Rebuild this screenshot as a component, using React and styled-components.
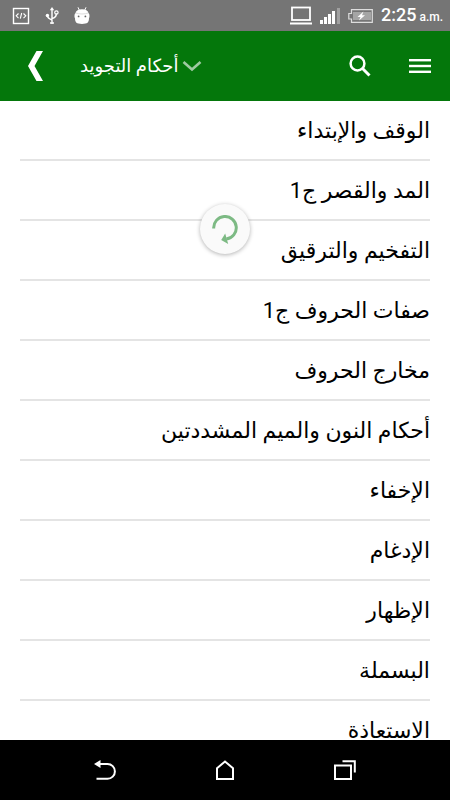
import React from "react";
import styled, { createGlobalStyle } from "styled-components";

const GlobalStyle = createGlobalStyle`
  * {
    box-sizing: border-box;
  }

  body {
    margin: 0;
    background: #ffffff;
    font-family: Roboto, "DejaVu Sans", sans-serif;
  }
`;

// Layout
const Screen = styled.div`
  display: flex;
  flex-direction: column;
  height: 100vh;
  overflow: hidden;
`;

const StatusBar = styled.div`
  display: flex;
  flex: none;
  align-items: center;
  justify-content: space-between;
  height: 31px;
  padding: 0 7px 0 12px;
  background: #757575;
  color: #ffffff;
`;

const StatusGroup = styled.div`
  display: flex;
  align-items: center;
  gap: ${({ $gap }) => $gap}px;
`;

const Clock = styled.time`
  display: flex;
  align-items: baseline;
  gap: 3px;
  font-size: 18px;
  font-weight: 500;
  line-height: 24px;
`;

const Meridiem = styled.span`
  font-size: 12px;
`;

const Header = styled.header`
  display: flex;
  flex: none;
  align-items: center;
  height: 70px;
  padding: 0 18px;
  background: #04770b;
  color: #ffffff;
`;

const IconButton = styled.button`
  display: flex;
  align-items: center;
  justify-content: center;
  width: ${({ $width }) => $width || 24}px;
  height: 48px;
  padding: 0;
  border: none;
  background: none;
  color: inherit;
  cursor: pointer;
`;

const TitleButton = styled.button`
  display: flex;
  align-items: center;
  gap: 4px;
  margin-left: 28px;
  padding: 0;
  border: none;
  background: none;
  color: inherit;
  font-family: inherit;
  font-size: 18px;
  line-height: 32px;
  cursor: pointer;
`;

const HeaderActions = styled.div`
  display: flex;
  gap: 36px;
  margin-left: auto;
`;

const Content = styled.main`
  position: relative;
  display: flex;
  flex: 1;
  flex-direction: column;
  min-height: 0;
`;

const LessonList = styled.ul`
  flex: 1;
  min-height: 0;
  margin: 0;
  padding: 0 20px;
  overflow-y: auto;
  list-style: none;
  scrollbar-width: none;
`;

const LessonItem = styled.li`
  border-bottom: 2px solid #e4e4e4;
`;

const LessonLink = styled.a`
  display: block;
  padding-top: 2px;
  color: #000000;
  font-size: 22px;
  line-height: 56px;
  text-decoration: none;
  white-space: nowrap;
`;

const Spinner = styled.div`
  position: absolute;
  top: 103px;
  left: 50%;
  display: flex;
  align-items: center;
  justify-content: center;
  width: 50px;
  height: 50px;
  margin-left: -25px;
  border-radius: 50%;
  background: #fafafa;
  box-shadow: 0 1px 4px rgba(0, 0, 0, 0.3);
`;

const NavBar = styled.nav`
  display: flex;
  flex: none;
  align-items: center;
  justify-content: center;
  gap: 96px;
  height: 60px;
  background: #000000;
  color: #ffffff;
`;

// Icons
const CodeIcon = () => (
  <svg width="18" height="18" viewBox="0 0 18 18" fill="none" stroke="#fff">
    <rect x="1.5" y="1.5" width="15" height="15" strokeWidth="1.4" />
    <path d="M6.5 6.5 4.2 8.8l2.3 2.3M11.5 6.5l2.3 2.3-2.3 2.3M9.7 6 8.3 11.6" strokeWidth="1.1" />
  </svg>
);

const UsbIcon = () => (
  <svg width="14" height="18" viewBox="0 0 14 18" fill="none" stroke="#fff" strokeWidth="1.4">
    <path d="M7 2v13M7 13C3 11.5 2.4 10.5 2.4 8.5M7 11.5c3.5-.8 4.4-2 4.4-5" />
    <path d="M7 0 9.2 3.2H4.8z" fill="#fff" stroke="none" />
    <path d="M5.2 16h3.6" strokeWidth="1.8" />
    <circle cx="2.4" cy="8.5" r="1.7" fill="#fff" stroke="none" />
    <circle cx="11.4" cy="5.5" r="1.7" strokeWidth="1.2" />
  </svg>
);

const DroidIcon = () => (
  <svg width="16" height="18" viewBox="0 0 16 18">
    <path d="M4 .3 5.2 3M12 .3 10.8 3" stroke="#fff" strokeWidth="1" />
    <path
      d="M1.3 6.5C2 3.5 4.5 2.2 8 2.2s6 1.3 6.7 4.3c1 .5 1 4 .3 4.6 0 4.5-1.5 5.9-7 5.9s-7-1.4-7-5.9C.3 10.5.3 7 1.3 6.5z"
      fill="#fff"
    />
    <path d="M2 6c3 1.3 9 1.3 12 0" fill="none" stroke="#c4c4c4" strokeWidth=".6" />
    <circle cx="4.6" cy="9.4" r=".9" fill="#666" />
    <circle cx="11.4" cy="9.4" r=".9" fill="#666" />
  </svg>
);

const LaptopIcon = () => (
  <svg width="22" height="19" viewBox="0 0 22 19" fill="none" stroke="#fff">
    <rect x="2" y="1.5" width="18" height="12.5" strokeWidth="1.8" />
    <path d="M0 17.5h22" strokeWidth="2" />
  </svg>
);

const SignalIcon = () => (
  <svg width="20" height="16" viewBox="0 0 20 16" fill="#fff">
    <rect x="0" y="12" width="3" height="4" />
    <rect x="4" y="9" width="3" height="7" />
    <rect x="8" y="6" width="3" height="10" />
    <rect x="12" y="3" width="3" height="13" />
    <rect x="17" y="0" width="3" height="16" fill="#a0a0a0" />
  </svg>
);

const BatteryIcon = () => (
  <svg width="25" height="14" viewBox="0 0 25 14" fill="none">
    <rect x="5" y="3" width="18" height="8" fill="#a5a5a5" />
    <path d="M3.5.7h20.8v12.6H3.5V10H.8V4.5h2.7z" stroke="#ddd" strokeWidth="1.2" />
    <path d="M15.5 2.5 9.5 8h3l-1.5 3.5L17 6.3h-3z" fill="#fff" />
  </svg>
);

const BackIcon = () => (
  <svg width="15" height="30" viewBox="0 0 15 30" fill="#fff">
    <path d="M8.5 0H15L6.5 15 15 30H8.5L0 15z" />
  </svg>
);

const CaretIcon = () => (
  <svg width="20" height="12" viewBox="0 0 20 12" fill="none" stroke="#9fcaa2" strokeWidth="2.6">
    <path d="M1.5 2 10 9.5 18.5 2" />
  </svg>
);

const SearchIcon = () => (
  <svg width="22" height="22" viewBox="0 0 22 22" fill="none" stroke="#fff">
    <circle cx="8.5" cy="8.5" r="6.9" strokeWidth="2.5" />
    <path d="M13.3 13.3 20.5 20.5" strokeWidth="3" />
  </svg>
);

const MenuIcon = () => (
  <svg width="22" height="14" viewBox="0 0 22 14" fill="#fff">
    <rect y="0" width="22" height="2.4" />
    <rect y="5.8" width="22" height="2.4" />
    <rect y="11.6" width="22" height="2.4" />
  </svg>
);

const RefreshIcon = () => (
  <svg width="26" height="29" viewBox="0 0 26 29">
    <path
      d="M1.7 13.5A11.3 11.3 0 1 1 14.3 24"
      fill="none"
      stroke="#7dba84"
      strokeWidth="3"
    />
    <path d="M13.2 18.5 16.2 29 9.2 25z" fill="#7dba84" />
  </svg>
);

const NavBackIcon = () => (
  <svg width="22" height="20" viewBox="0 0 22 20" fill="none" stroke="#fff" strokeWidth="2">
    <path d="M5 4h8.5a7.3 7.3 0 0 1 0 14.8h-11" />
    <path d="M0 4 6.5 0v8z" fill="#fff" stroke="none" />
  </svg>
);

const NavHomeIcon = () => (
  <svg width="20" height="20" viewBox="0 0 20 20" fill="none" stroke="#fff" strokeWidth="2">
    <path d="M2 8.3 10 1.5l8 6.8V19H2z" />
  </svg>
);

const NavRecentIcon = () => (
  <svg width="22" height="20" viewBox="0 0 22 20" fill="none" stroke="#fff">
    <rect x="1" y="5.5" width="16" height="13.5" strokeWidth="2" />
    <path d="M8.5 1.2h12.3v11.3" strokeWidth="2" />
  </svg>
);

const lessons = [
  "الوقف والإبتداء",
  "المد والقصر ج1",
  "التفخيم والترقيق",
  "صفات الحروف ج1",
  "مخارج الحروف",
  "أحكام النون والميم المشددتين",
  "الإخفاء",
  "الإدغام",
  "الإظهار",
  "البسملة",
  "الاستعاذة",
];

const App = () => {
  return (
    <Screen>
      <GlobalStyle />
      <StatusBar>
        <StatusGroup $gap={15}>
          <CodeIcon />
          <UsbIcon />
          <DroidIcon />
        </StatusGroup>
        <StatusGroup $gap={8}>
          <LaptopIcon />
          <SignalIcon />
          <BatteryIcon />
          <Clock>
            2:25 <Meridiem>a.m.</Meridiem>
          </Clock>
        </StatusGroup>
      </StatusBar>

      <Header>
        <IconButton $width={34} aria-label="رجوع">
          <BackIcon />
        </IconButton>
        <TitleButton>
          <span dir="rtl">أحكام التجويد</span>
          <CaretIcon />
        </TitleButton>
        <HeaderActions>
          <IconButton aria-label="بحث">
            <SearchIcon />
          </IconButton>
          <IconButton aria-label="القائمة">
            <MenuIcon />
          </IconButton>
        </HeaderActions>
      </Header>

      <Content>
        <LessonList dir="rtl">
          {lessons.map((lesson) => (
            <LessonItem key={lesson}>
              <LessonLink href="#">{lesson}</LessonLink>
            </LessonItem>
          ))}
        </LessonList>
        <Spinner>
          <RefreshIcon />
        </Spinner>
      </Content>

      <NavBar>
        <IconButton aria-label="السابق">
          <NavBackIcon />
        </IconButton>
        <IconButton aria-label="الرئيسية">
          <NavHomeIcon />
        </IconButton>
        <IconButton aria-label="التطبيقات">
          <NavRecentIcon />
        </IconButton>
      </NavBar>
    </Screen>
  );
};

export default App;
